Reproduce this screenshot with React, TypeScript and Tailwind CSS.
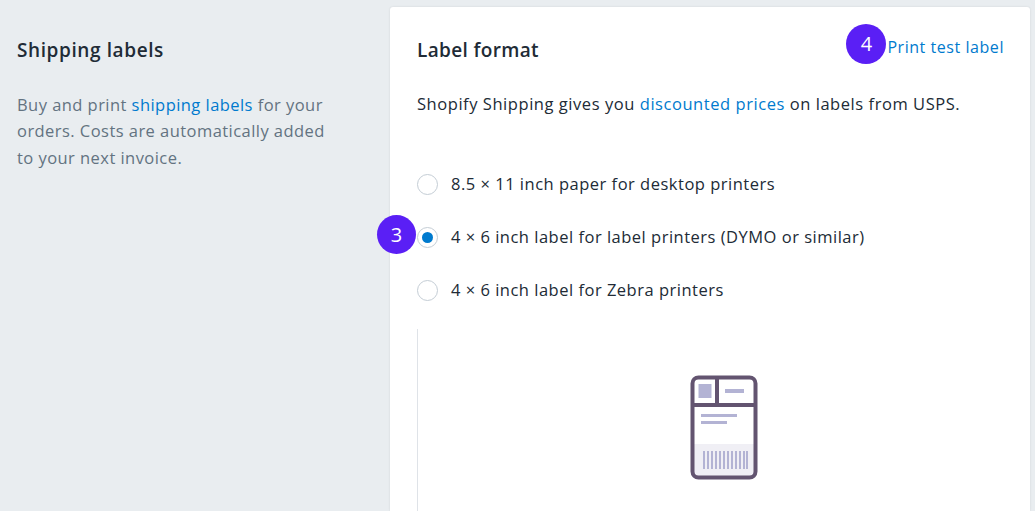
export default function App() {
  const font = { fontFamily: '"Open Sans", "Noto Sans", sans-serif' };
  return (
    <div className="w-[1035px] h-[520px] bg-white overflow-hidden" style={font}>
      <div className="h-[511px] bg-[#e9edf0] flex pt-[7px] pl-[17px] pr-[5px] overflow-hidden">
        <aside className="w-[373px] shrink-0 pt-[31px] pr-[55px]">
          <h2 className="text-[19px] leading-[24px] tracking-[0.6px] font-semibold text-[#212b36]">Shipping labels</h2>
          <p className="mt-[30px] text-[16.5px] leading-[26.4px] tracking-[0.45px] text-[#637381]">
            Buy and print <span className="text-[#007ace]">shipping labels</span> for your orders. Costs are automatically added to your next invoice.
          </p>
        </aside>
        <main className="relative flex-1 bg-white rounded-t-[3px] shadow-[0_0_2px_rgba(63,63,68,0.15)] pl-[27px] pr-[26px] pt-[31px]">
          <div className="flex items-start justify-between">
            <h3 className="text-[19px] leading-[24px] tracking-[0.35px] font-semibold text-[#212b36]">Label format</h3>
            <a className="relative text-[16px] leading-[20px] tracking-[0.55px] -mt-[1px] text-[#007ace]">
              Print test label
              <span className="absolute left-[-41px] top-[-13px] w-[40px] h-[40px] rounded-full bg-[#5a1ff5] text-white flex items-center justify-center text-[20px] font-normal tracking-normal">4</span>
            </a>
          </div>
          <p className="mt-[30px] text-[16.5px] leading-[24px] tracking-[0.55px] text-[#212b36]">
            Shopify Shipping gives you <span className="text-[#007ace]">discounted prices</span> on labels from USPS.
          </p>
          <div className="mt-[58px] flex flex-col gap-[32px] text-[16.5px] tracking-[0.5px] text-[#212b36]">
            <label className="flex items-center gap-[13px] h-[21px]">
              <span className="w-[21px] h-[21px] rounded-full bg-white border border-[#c4cdd5] shrink-0" />
              8.5 × 11 inch paper for desktop printers
            </label>
            <label className="relative flex items-center gap-[13px] h-[21px]">
              <span className="absolute left-[-40px] top-[-12px] w-[39px] h-[39px] rounded-full bg-[#5a1ff5] text-white flex items-center justify-center text-[20px] tracking-normal">3</span>
              <span className="w-[21px] h-[21px] rounded-full bg-white border border-[#c4cdd5] shrink-0 flex items-center justify-center">
                <span className="w-[11px] h-[11px] rounded-full bg-[#007ace]" />
              </span>
              4 × 6 inch label for label printers (DYMO or similar)
            </label>
            <label className="flex items-center gap-[13px] h-[21px]">
              <span className="w-[21px] h-[21px] rounded-full bg-white border border-[#c4cdd5] shrink-0" />
              4 × 6 inch label for Zebra printers
            </label>
          </div>
          <div className="mt-[28px] h-[200px] border-l border-[#dfe3e8] flex justify-center pt-[46px] pl-[26px]">
            <svg width="68" height="106" viewBox="0 0 68 106" fill="none">
              <rect x="3" y="69" width="62" height="34" fill="#f0eff5" />
              <rect x="8.5" y="9" width="13" height="14" fill="#b3b3d4" />
              <rect x="35" y="14" width="19" height="4" fill="#b3b3d4" />
              <rect x="11" y="39" width="36" height="3" fill="#b3b3d4" />
              <rect x="11" y="46" width="26" height="3" fill="#b3b3d4" />
              {[13, 17, 21, 25, 29, 33, 37, 41, 45, 49, 53, 56].map((x) => (
                <rect key={x} x={x} y="76" width="2" height="18" fill="#b3b3d4" />
              ))}
              <rect x="2.5" y="2.5" width="63" height="100" rx="6" stroke="#635470" strokeWidth="4" />
              <path d="M2 30H66M27 3V30" stroke="#635470" strokeWidth="4" />
            </svg>
          </div>
        </main>
      </div>
    </div>
  );
}
